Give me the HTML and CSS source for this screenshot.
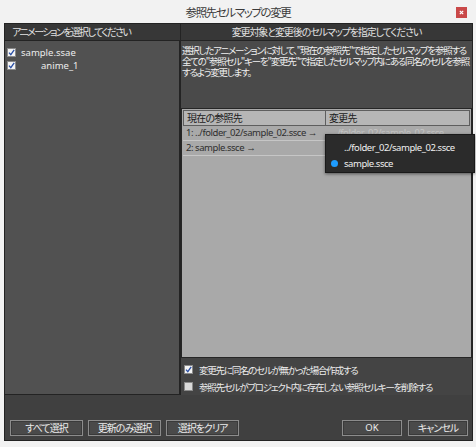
FILE: index.html
```html
<!DOCTYPE html>
<html lang="ja">
<head>
<meta charset="utf-8">
<link rel="stylesheet" href="styles.css">
</head>
<body>
<div class="titlebar">
  <span></span>
  <span class="title">参照先セルマップの変更</span>
  <span class="close"><svg width="11" height="11" viewBox="0 0 11 11"><rect width="11" height="11" fill="#c94848"/><path d="M3.8 3.8 L7.2 7.2 M7.2 3.8 L3.8 7.2" stroke="#fff" stroke-width="1.2"/></svg></span>
</div>
<div class="client">
  <div class="headers">
    <div class="h hleft">アニメーションを選択してください</div>
    <div class="h hright">変更対象と変更後のセルマップを指定してください</div>
  </div>
  <div class="main">
    <div class="leftpanel">
      <div class="item"><span class="cb on"></span><span class="lat">sample.ssae</span></div>
      <div class="item sub"><span class="cb on"></span><span class="lat indent">anime_1</span></div>
    </div>
    <div class="rightpanel">
      <div class="desc"><div class="line">選択したアニメーションに対して、"現在の参照先"で指定したセルマップを参照する</div><div class="line">全ての"参照セル"キーを"変更先"で指定したセルマップ内にある同名のセルを参照</div><div class="line">するよう変更します。</div></div>
      <div class="table">
        <div class="thead"><div class="th c1">現在の参照先</div><div class="th c2">変更先</div></div>
        <div class="tr"><div class="td c1">1: ../folder_02/sample_02.ssce →</div><div class="td c2 dim">../folder_02/sample_02.ssce</div></div>
        <div class="tr"><div class="td c1">2: sample.ssce →</div><div class="td c2"></div></div>
        <div class="popup">
          <div class="opt"><span class="dot off"></span>../folder_02/sample_02.ssce</div>
          <div class="opt"><span class="dot"></span>sample.ssce</div>
        </div>
      </div>
      <div class="opts">
        <div class="orow"><span class="cb on"></span><span class="jp">変更先に同名のセルが無かった場合作成する</span></div>
        <div class="orow"><span class="cb"></span><span class="jp">参照先セルがプロジェクト内に存在しない参照セルキーを削除する</span></div>
      </div>
    </div>
  </div>
  <div class="footer">
    <div class="group">
      <span class="btn w73">すべて選択</span>
      <span class="btn w73">更新のみ選択</span>
      <span class="btn w73">選択をクリア</span>
    </div>
    <div class="group g6">
      <span class="btn w60 lat">OK</span>
      <span class="btn w60">キャンセル</span>
    </div>
  </div>
</div>
</body>
</html>
```
FILE: styles.css
```css
html, body {
  margin: 0;
  padding: 0;
}
body {
  width: 476px;
  height: 447px;
  overflow: hidden;
  background: #f2f2f2;
  font-family: "Noto Sans", "Noto Sans CJK JP", sans-serif;
  font-feature-settings: "palt";
  font-size: 10px;
}
.titlebar {
  height: 23px;
  display: grid;
  grid-template-columns: 1fr auto 1fr;
  align-items: center;
}
.title {
  font-family: "Noto Sans CJK JP", sans-serif;
  font-size: 11.5px;
  letter-spacing: -1.4px;
  color: #3a3a3a;
  padding-top: 1px;
}
.close {
  justify-self: end;
  margin-right: 9px;
  margin-top: 2px;
  width: 11px;
  height: 11px;
  display: block;
}
.close svg { display: block; }
.client {
  margin-left: 4px;
  width: 469px;
  height: 418px;
  box-sizing: border-box;
  border: 1px solid #232323;
  background: #404040;
  display: flex;
  flex-direction: column;
}
.headers {
  display: flex;
  height: 16px;
  background: #373737;
  border-bottom: 1px solid #232323;
  color: #e2e2e2;
  font-family: "Noto Sans CJK JP", sans-serif;
  font-size: 10px;
  line-height: 16px;
  white-space: nowrap;
}
.hleft {
  width: 168px;
  flex: none;
  padding-left: 7px;
  border-right: 1px solid #232323;
  letter-spacing: -1.6px;
}
.hright {
  flex: 1;
  text-align: center;
  letter-spacing: -1.1px;
}
.main {
  display: flex;
  height: 354px;
}
.leftpanel {
  width: 176px;
  flex: none;
  box-sizing: border-box;
  background: #515151;
  border-right: 2px solid #232323;
  border-bottom: 1px solid #232323;
  padding-top: 5px;
}
.item {
  height: 13px;
  display: flex;
  align-items: center;
  padding-left: 2px;
  color: #ececec;
}
.lat {
  font-family: "Noto Sans", sans-serif;
  font-size: 9.5px;
}
.item .lat { margin-left: 5px; }
.item .indent { margin-left: 25px; }
.cb {
  width: 9px;
  height: 9px;
  box-sizing: border-box;
  background: #d9d9d9;
  border: 1px solid #8a8a8a;
  display: inline-block;
  flex: none;
}
.cb.on {
  background: #f4f4f4 url("data:image/svg+xml;utf8,<svg xmlns='http://www.w3.org/2000/svg' width='7' height='7' viewBox='0 0 7 7'><path d='M1 3.6 L2.8 5.6 L6.2 0.8' fill='none' stroke='%232a4fa6' stroke-width='1.3'/></svg>") no-repeat center;
}
.rightpanel {
  flex: 1;
  min-width: 0;
  display: flex;
  flex-direction: column;
  background: #444;
}
.desc {
  height: 67px;
  flex: none;
  box-sizing: border-box;
  background: #4a4a4a;
  color: #f0f0f0;
  font-family: "Noto Sans CJK JP", sans-serif;
  font-size: 9.5px;
  padding: 4px 0 0 1px;
  white-space: nowrap;
  letter-spacing: -1.25px;
}
.line {
  height: 11px;
  line-height: 11px;
}
.table {
  position: relative;
  height: 250px;
  flex: none;
  box-sizing: border-box;
  border: 1px solid #262626;
  background: #a9a9a9;
  padding: 1px 1px 0 1px;
}
.thead {
  display: flex;
  height: 16px;
  background: #b6b6b6;
  border: 1px solid #5e5e5e;
  box-sizing: border-box;
}
.th {
  font-family: "Noto Sans CJK JP", sans-serif;
  font-size: 10px;
  letter-spacing: -0.8px;
  line-height: 14px;
  color: #202020;
  padding-left: 3px;
}
.th.c1 { width: 138px; flex: none; border-right: 1px solid #5e5e5e; }
.tr {
  display: flex;
  height: 15px;
  border-bottom: 1px solid #c6c6c6;
  box-sizing: border-box;
}
.td {
  font-family: "Noto Sans", sans-serif;
  font-size: 9.5px;
  letter-spacing: -0.45px;
  line-height: 14px;
  color: #2e2e2e;
  padding-left: 3px;
  white-space: nowrap;
}
.td.c1 { width: 139px; flex: none; }
.td.c2 { padding-left: 8px; overflow: hidden; }
.td.dim { color: #c4c4c4; }
.popup {
  position: absolute;
  left: 143px;
  top: 25px;
  width: 150px;
  height: 39px;
  box-sizing: border-box;
  background: #2b2b2b;
  border: 1px solid #1a1a1a;
  box-shadow: 0 1px 3px rgba(0,0,0,0.5);
  padding-top: 4px;
}
.opt {
  height: 16px;
  display: flex;
  align-items: center;
  font-family: "Noto Sans", sans-serif;
  font-size: 9.5px;
  letter-spacing: -0.45px;
  color: #f0f0f0;
  padding-left: 5px;
  white-space: nowrap;
}
.dot {
  width: 7px;
  height: 7px;
  border-radius: 50%;
  background: #1e9cff;
  margin-right: 6px;
  flex: none;
}
.dot.off { background: transparent; }
.opts {
  flex: 1;
  background: #444;
  padding-top: 3px;
  border-bottom: 1px solid #232323;
}
.orow {
  height: 17px;
  display: flex;
  align-items: center;
  padding-left: 3px;
}
.orow .jp {
  margin-left: 6px;
  color: #ececec;
  font-family: "Noto Sans CJK JP", sans-serif;
  font-size: 9.5px;
  letter-spacing: -1.25px;
  white-space: nowrap;
}
.footer {
  flex: 1;
  display: flex;
  justify-content: space-between;
  align-items: flex-end;
  padding: 0 4px 4px 5px;
  background: #404040;
}
.group {
  display: flex;
  gap: 5px;
}
.g6 { gap: 6px; }
.btn {
  height: 16px;
  box-sizing: border-box;
  border: 1px solid #8c8c8c;
  background: #4a4a4a;
  color: #ececec;
  font-family: "Noto Sans CJK JP", sans-serif;
  font-size: 10px;
  letter-spacing: -1px;
  line-height: 14px;
  text-align: center;
  box-shadow: inset 0 0 0 1px #3a3a3a;
}
.btn.lat { font-family: "Noto Sans", sans-serif; font-size: 9.5px; letter-spacing: 0; }
.w73 { width: 73px; }
.w60 { width: 60px; }
```
